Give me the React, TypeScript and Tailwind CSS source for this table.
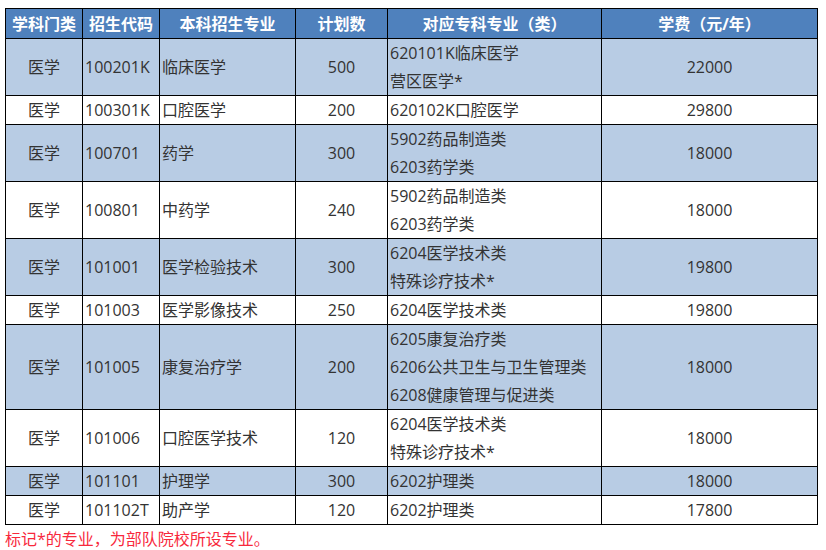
const rows: { code: string; major: string; plan: string; related: string[]; fee: string }[] = [
  { code: "100201K", major: "临床医学", plan: "500", related: ["620101K临床医学", "营区医学*"], fee: "22000" },
  { code: "100301K", major: "口腔医学", plan: "200", related: ["620102K口腔医学"], fee: "29800" },
  { code: "100701", major: "药学", plan: "300", related: ["5902药品制造类", "6203药学类"], fee: "18000" },
  { code: "100801", major: "中药学", plan: "240", related: ["5902药品制造类", "6203药学类"], fee: "18000" },
  { code: "101001", major: "医学检验技术", plan: "300", related: ["6204医学技术类", "特殊诊疗技术*"], fee: "19800" },
  { code: "101003", major: "医学影像技术", plan: "250", related: ["6204医学技术类"], fee: "19800" },
  {
    code: "101005",
    major: "康复治疗学",
    plan: "200",
    related: ["6205康复治疗类", "6206公共卫生与卫生管理类", "6208健康管理与促进类"],
    fee: "18000",
  },
  { code: "101006", major: "口腔医学技术", plan: "120", related: ["6204医学技术类", "特殊诊疗技术*"], fee: "18000" },
  { code: "101101", major: "护理学", plan: "300", related: ["6202护理类"], fee: "18000" },
  { code: "101102T", major: "助产学", plan: "120", related: ["6202护理类"], fee: "17800" },
];

const headers = ["学科门类", "招生代码", "本科招生专业", "计划数", "对应专科专业（类）", "学费（元/年）"];

export default function App() {
  return (
    <div
      className="w-[826px] h-[550px] bg-white pt-[8px] pl-[5px] text-[16px] text-[#333333]"
      style={{ fontFamily: '"Open Sans", "Noto Sans CJK SC", sans-serif' }}
    >
      <table className="table-fixed border-collapse border border-black w-[812px]">
        <colgroup>
          <col className="w-[77px]" />
          <col className="w-[77px]" />
          <col className="w-[136px]" />
          <col className="w-[92px]" />
          <col className="w-[214px]" />
          <col className="w-[216px]" />
        </colgroup>
        <thead>
          <tr className="bg-[#4f81bd] h-[30px]">
            {headers.map((h) => (
              <th key={h} className="border border-black text-white font-bold text-center p-0 leading-[28px] whitespace-nowrap">
                {h}
              </th>
            ))}
          </tr>
        </thead>
        <tbody>
          {rows.map((r, i) => (
            <tr key={r.code} className={i % 2 === 0 ? "bg-[#b8cce4]" : "bg-white"}>
              <td className="border border-black text-center p-0 leading-[28px]">医学</td>
              <td className="border border-black pl-[2px] leading-[28px]">{r.code}</td>
              <td className="border border-black pl-[2px] leading-[28px]">{r.major}</td>
              <td className="border border-black text-center p-0 leading-[28px]">{r.plan}</td>
              <td className="border border-black pl-[2px] leading-[28px] whitespace-nowrap">
                {r.related.map((t) => (
                  <div key={t}>{t}</div>
                ))}
              </td>
              <td className="border border-black text-center p-0 leading-[28px]">{r.fee}</td>
            </tr>
          ))}
        </tbody>
      </table>
      <p className="mt-[2px] text-[#f8283c] leading-[24px]">标记*的专业，为部队院校所设专业。</p>
    </div>
  );
}
